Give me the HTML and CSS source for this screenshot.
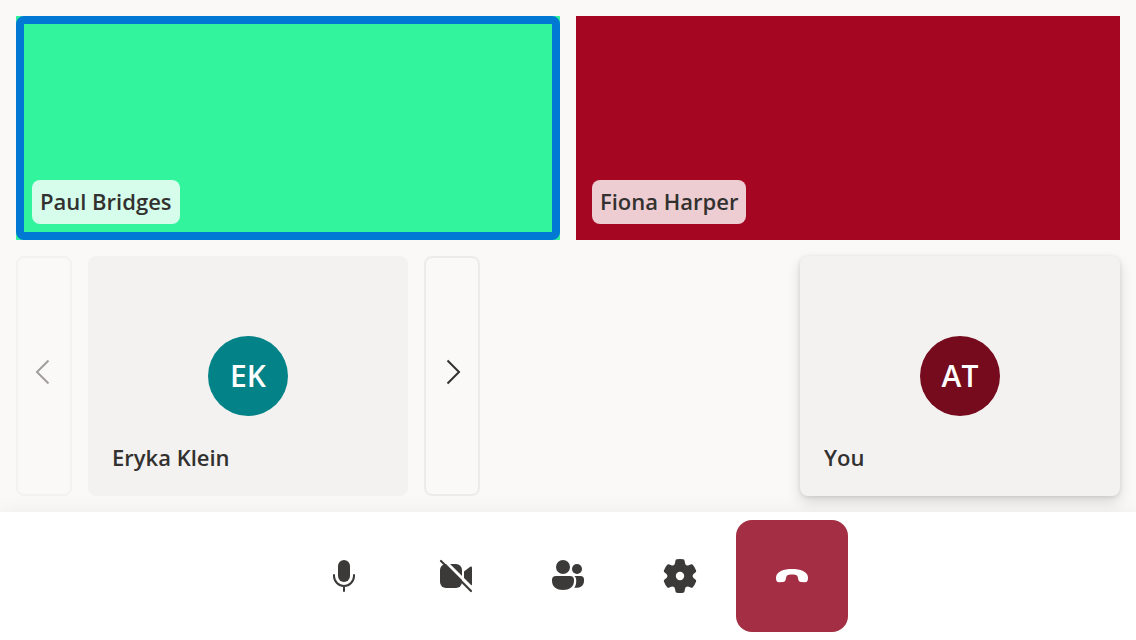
FILE: index.html
```html
<!DOCTYPE html>
<html lang="en">
<head>
<meta charset="utf-8">
<meta name="viewport" content="width=device-width, initial-scale=1">
<title>Call</title>
<link rel="stylesheet" href="styles.css">
</head>
<body class="call">
<main class="stage">
  <section class="videos" aria-label="Video participants">
    <article class="video video-green speaking"><span class="name-tag">Paul Bridges</span></article>
    <article class="video video-red"><span class="name-tag">Fiona Harper</span></article>
  </section>
  <section class="strip" aria-label="Other participants">
    <button class="pager" type="button" aria-label="Previous" disabled>
      <svg class="chevron" viewBox="0 0 32 32"><path d="M20.500 4.500L9 16l11.500 11.500"/></svg>
    </button>
    <article class="tile">
      <div class="avatar avatar-teal">EK</div>
      <span class="tile-name">Eryka Klein</span>
    </article>
    <button class="pager" type="button" aria-label="Next">
      <svg class="chevron" viewBox="0 0 32 32"><path d="M11.500 4.500L23 16 11.500 27.500"/></svg>
    </button>
    <article class="tile tile-self">
      <div class="avatar avatar-wine">AT</div>
      <span class="tile-name">You</span>
    </article>
  </section>
</main>
<footer class="controls">
  <button class="control" type="button" aria-label="Mute">
    <svg class="icon" viewBox="0 0 40 40"><rect x="14" y="4" width="12" height="22" rx="6" fill="currentColor"/><path d="M10 19v1a10 10 0 0 0 20 0v-1M20 30v5" fill="none" stroke="currentColor" stroke-width="2" stroke-linecap="round"/></svg>
  </button>
  <button class="control" type="button" aria-label="Turn camera on">
    <svg class="icon" viewBox="0 0 40 40"><rect x="4" y="8" width="22" height="24" rx="6" fill="currentColor"/><path d="M28 15.500l6.200-4.800q1.800-.9 1.800 1v16.600q0 1.900-1.800 1L28 24.500z" fill="currentColor"/><path d="M5 1l34 34" stroke="#fff" stroke-width="3"/><path d="M5 5l30 30" stroke="currentColor" stroke-width="2.200" stroke-linecap="round"/></svg>
  </button>
  <button class="control" type="button" aria-label="People">
    <svg class="icon" viewBox="0 0 40 40" fill="currentColor"><circle cx="15" cy="11" r="7"/><circle cx="29" cy="13" r="5"/><path d="M8 20h14a4 4 0 0 1 4 4v1c0 6-5 9-11 9S4 31 4 25v-1a4 4 0 0 1 4-4z"/><path d="M26.300 20H32.500a3.500 3.500 0 0 1 3.500 3.500v1.500c0 5-4.500 7.300-9.800 6.800 1.300-1.700 2-3.800 2-6.300v-1.500c0-1.500-.7-3-1.900-4z"/></svg>
  </button>
  <button class="control" type="button" aria-label="Settings">
    <svg class="icon" viewBox="0 0 40 40">
      <defs><path id="tooth" d="M13 10q1.700-1.200 2-3l.5-2.500q.2-1 1.200-1.200 3.300-.6 6.600 0 1 .2 1.200 1.200L25 7q.3 1.800 2 3l-3 5h-8z"/></defs>
      <g fill="currentColor"><circle cx="20" cy="20" r="12"/><use href="#tooth"/><use href="#tooth" transform="rotate(60 20 20)"/><use href="#tooth" transform="rotate(120 20 20)"/><use href="#tooth" transform="rotate(180 20 20)"/><use href="#tooth" transform="rotate(240 20 20)"/><use href="#tooth" transform="rotate(300 20 20)"/></g>
      <circle cx="20" cy="20" r="4.200" fill="#fff"/>
    </svg>
  </button>
  <button class="control control-leave" type="button" aria-label="Leave">
    <svg class="icon" viewBox="0 0 40 40" fill="currentColor"><path d="M4 21.500C4 15.500 12 13 20 13s16 2.500 16 8.500c0 3.600-1 5-3.500 4.800L29 26c-1.700-.2-2.300-1-2.700-2.500l-.6-2.500c-.3-1.200-.7-1.700-1.900-2-2.400-.6-5.200-.6-7.600 0-1.200.3-1.600.8-1.900 2l-.6 2.500c-.4 1.500-1 2.300-2.700 2.500l-3.500.3C5 26.500 4 25.100 4 21.500z"/></svg>
  </button>
</footer>
</body>
</html>
```

FILE: styles.css
```css
* {
  box-sizing: border-box;
}

.call {
  margin: 0;
  min-height: 100vh;
  display: flex;
  flex-direction: column;
  background: #faf9f8;
  color: #323130;
  font-family: "Open Sans", "Noto Sans", sans-serif;
  font-size: 22px;
  font-weight: 600;
  line-height: 28px;
}

.stage {
  flex: 1;
  display: flex;
  flex-direction: column;
  gap: 16px;
  padding: 16px;
}

.videos {
  flex: 1;
  display: grid;
  grid-template-columns: 1fr 1fr;
  gap: 16px;
}

.video {
  position: relative;
  display: flex;
  align-items: flex-end;
  padding: 16px;
}

.video-green {
  background: #32f49c;
}

.video-red {
  background: #a50722;
}

.speaking::after {
  content: "";
  position: absolute;
  inset: 0;
  border: 8px solid #0078d4;
  border-radius: 8px;
}

.name-tag {
  padding: 7px 8px 9px;
  border-radius: 8px;
  background: rgba(255, 255, 255, 0.8);
}

.strip {
  display: flex;
  gap: 16px;
  height: 240px;
}

.pager {
  display: flex;
  align-items: center;
  justify-content: center;
  width: 56px;
  padding: 0 0 8px;
  border: 2px solid #edebe9;
  border-radius: 8px;
  background: transparent;
  color: #323130;
}

.pager:disabled {
  border-color: #f3f2f1;
  color: #a19f9d;
}

.chevron {
  flex: none;
  width: 32px;
  height: 32px;
  fill: none;
  stroke: currentColor;
  stroke-width: 2;
}

.tile {
  display: flex;
  flex-direction: column;
  align-items: center;
  justify-content: flex-end;
  gap: 27px;
  width: 320px;
  padding: 24px 24px 25px;
  border-radius: 8px;
  background: #f3f2f1;
}

.tile-self {
  margin-left: auto;
  box-shadow: 0 6px 14px rgba(0, 0, 0, 0.13), 0 1px 4px rgba(0, 0, 0, 0.11);
}

.tile-name {
  align-self: flex-start;
}

.avatar {
  display: flex;
  align-items: center;
  justify-content: center;
  width: 80px;
  height: 80px;
  border-radius: 50%;
  color: #fff;
  font-size: 30px;
}

.avatar-teal {
  background: #038387;
}

.avatar-wine {
  background: #750b1c;
}

.controls {
  position: relative;
  display: flex;
  justify-content: center;
  padding: 8px;
  background: #fff;
  box-shadow: 0 0 20px rgba(0, 0, 0, 0.06);
}

.control {
  display: flex;
  align-items: center;
  justify-content: center;
  width: 112px;
  height: 112px;
  padding: 0;
  border: 0;
  border-radius: 16px;
  background: transparent;
  color: #3b3a39;
}

.control-leave {
  background: #a42e43;
  color: #fff;
}

.icon {
  width: 40px;
  height: 40px;
}
```
